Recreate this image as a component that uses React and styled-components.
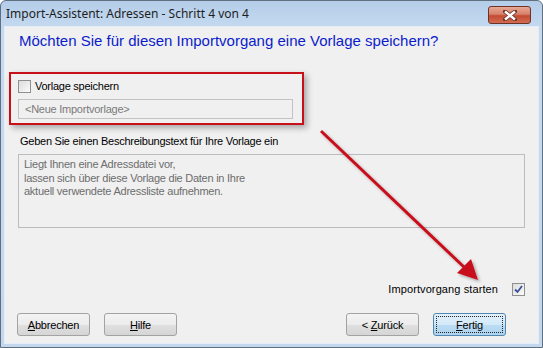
import styled, { createGlobalStyle } from "styled-components";

const Global = createGlobalStyle`
  html, body { margin: 0; padding: 0; background: #fff; }
  body { width: 543px; height: 348px; overflow: hidden; }
`;

const Frame = styled.div`
  position: relative;
  box-sizing: border-box;
  width: 543px;
  height: 348px;
  border: 1px solid #5f6f80;
  border-radius: 6px 6px 0 0;
  background: linear-gradient(#b4cde8, #c6dbf1 30px, #c3d8ef);
  display: flex;
  flex-direction: column;
  padding: 0 3px 3px 3px;
  font-family: "Liberation Sans", Arial, sans-serif;
`;

const TitleBar = styled.div`
  height: 25px;
  display: flex;
  align-items: center;
  justify-content: space-between;
  padding: 0 8px 0 2px;
  font-family: "Noto Sans", "Liberation Sans", sans-serif;
  font-size: 12px;
  color: #1e1e1e;
`;

const CloseButton = styled.div`
  width: 41px;
  height: 16px;
  margin-top: 3px;
  border: 1px solid #6b3327;
  border-radius: 3px;
  background: linear-gradient(#e8a895, #d7816b 45%, #c44a32 55%, #d26d52);
  display: flex;
  align-items: center;
  justify-content: center;
`;

const Client = styled.div`
  flex: 1;
  background: #f0f0f0;
  border: 1px solid #e4eef8;
  display: flex;
  flex-direction: column;
  font-size: 11px;
  letter-spacing: -0.25px;
  color: #000;
`;

const Heading = styled.div`
  margin: 5px 0 0 14px;
  height: 18px;
  font-size: 15px;
  letter-spacing: 0;
  color: #0b1ccc;
  line-height: 18px;
`;

const Highlight = styled.div`
  margin: 22px 0 0 4px;
  width: 295px;
  height: 53px;
  box-sizing: border-box;
  border: 2px solid #c8101a;
  box-shadow: 3px 3px 6px rgba(0, 0, 0, 0.3);
  padding: 5px 9px 0 7px;
  display: flex;
  flex-direction: column;
  gap: 6px;
`;

const CheckRow = styled.label`
  display: flex;
  align-items: center;
  gap: 4px;
  height: 14px;
  justify-content: ${(p) => (p.$right ? "flex-end" : "flex-start")};
`;

const Box = styled.span`
  box-sizing: border-box;
  width: 13px;
  height: 13px;
  border: 1px solid #8f8f8f;
  background: linear-gradient(135deg, #dcdcdc, #fbfbfb);
  display: inline-flex;
  align-items: center;
  justify-content: center;
  margin-left: ${(p) => (p.$gap ? "10px" : "0")};
`;

const TextField = styled.div`
  box-sizing: border-box;
  height: 20px;
  border: 1px solid #c3c3c3;
  background: #f0f0f0;
  color: #7a7a7a;
  padding: 0 6px;
  display: flex;
  align-items: center;
`;

const Label = styled.div`
  margin: 10px 0 0 15px;
  height: 13px;
  line-height: 13px;
`;

const TextArea = styled.div`
  margin: 6px 13px 0 13px;
  height: 74px;
  box-sizing: border-box;
  border: 1px solid #bcbcbc;
  padding: 3px 5px;
  color: #6d6d6d;
  line-height: 13.5px;
`;

const Spacer = styled.div`
  flex: 1;
`;

const StartRow = styled.div`
  margin: 0 13px 0 0;
  letter-spacing: 0.1px;
`;

const ButtonBar = styled.div`
  display: flex;
  margin: 17px 32px 7px 12px;
  gap: 14px;
`;

const Button = styled.button`
  width: 73px;
  height: 23px;
  box-sizing: border-box;
  font-family: "Liberation Sans", Arial, sans-serif;
  font-size: 11px;
  letter-spacing: -0.2px;
  color: #000;
  border: 1px solid ${(p) => (p.$default ? "#4f86b4" : "#a3a3a3")};
  border-radius: 3px;
  background: ${(p) =>
    p.$default
      ? "linear-gradient(#e3f1fb, #d2e9f8 50%, #bcdcf3 51%, #aed3ef)"
      : "linear-gradient(#f3f3f3, #ececec 50%, #e0e0e0 51%, #d5d5d5)"};
  margin-left: ${(p) => (p.$push ? "auto" : "0")};
  padding: 0;
  position: relative;
  u { text-decoration: underline; }
  &::after {
    content: "";
    display: ${(p) => (p.$default ? "block" : "none")};
    position: absolute;
    inset: 2px;
    border: 1px dotted #222;
  }
`;

function Check() {
  return (
    <svg width="9" height="9" viewBox="0 0 9 9">
      <path d="M1 4.5 L3.5 7 L8 1" fill="none" stroke="#3c4f9a" strokeWidth="1.8" />
    </svg>
  );
}

function Arrow() {
  return (
    <svg
      width="543"
      height="348"
      style={{ position: "absolute", left: 0, top: 0, pointerEvents: "none" }}
    >
      <defs>
        <filter id="sh" x="-10%" y="-10%" width="130%" height="130%">
          <feDropShadow dx="2" dy="2" stdDeviation="1.5" floodOpacity="0.3" />
        </filter>
      </defs>
      <g filter="url(#sh)">
        <line x1="320" y1="130" x2="464" y2="267" stroke="#c8101a" strokeWidth="3" />
        <polygon points="477,279 456,272 470,258" fill="#c8101a" />
      </g>
    </svg>
  );
}

export default function App() {
  return (
    <>
      <Global />
      <Frame>
        <TitleBar>
          <span>Import-Assistent: Adressen - Schritt 4 von 4</span>
          <CloseButton>
            <svg width="14" height="11" viewBox="0 0 14 11">
              <path
                d="M2 1.5 L12 9.5 M12 1.5 L2 9.5"
                stroke="#6b3327"
                strokeWidth="4"
                strokeLinecap="round"
              />
              <path d="M2 1.5 L12 9.5 M12 1.5 L2 9.5" stroke="#fff" strokeWidth="2.4" />
            </svg>
          </CloseButton>
        </TitleBar>
        <Client>
          <Heading>Möchten Sie für diesen Importvorgang eine Vorlage speichern?</Heading>
          <Highlight>
            <CheckRow>
              <Box />
              Vorlage speichern
            </CheckRow>
            <TextField>&lt;Neue Importvorlage&gt;</TextField>
          </Highlight>
          <Label>Geben Sie einen Beschreibungstext für Ihre Vorlage ein</Label>
          <TextArea>
            Liegt Ihnen eine Adressdatei vor,
            <br />
            lassen sich über diese Vorlage die Daten in Ihre
            <br />
            aktuell verwendete Adressliste aufnehmen.
          </TextArea>
          <Spacer />
          <StartRow>
            <CheckRow $right>
              Importvorgang starten
              <Box $gap>
                <Check />
              </Box>
            </CheckRow>
          </StartRow>
          <ButtonBar>
            <Button>
              <u>A</u>bbrechen
            </Button>
            <Button>
              <u>H</u>ilfe
            </Button>
            <Button $push>
              &lt; <u>Z</u>urück
            </Button>
            <Button $default>
              <u>F</u>ertig
            </Button>
          </ButtonBar>
        </Client>
        <Arrow />
      </Frame>
    </>
  );
}
